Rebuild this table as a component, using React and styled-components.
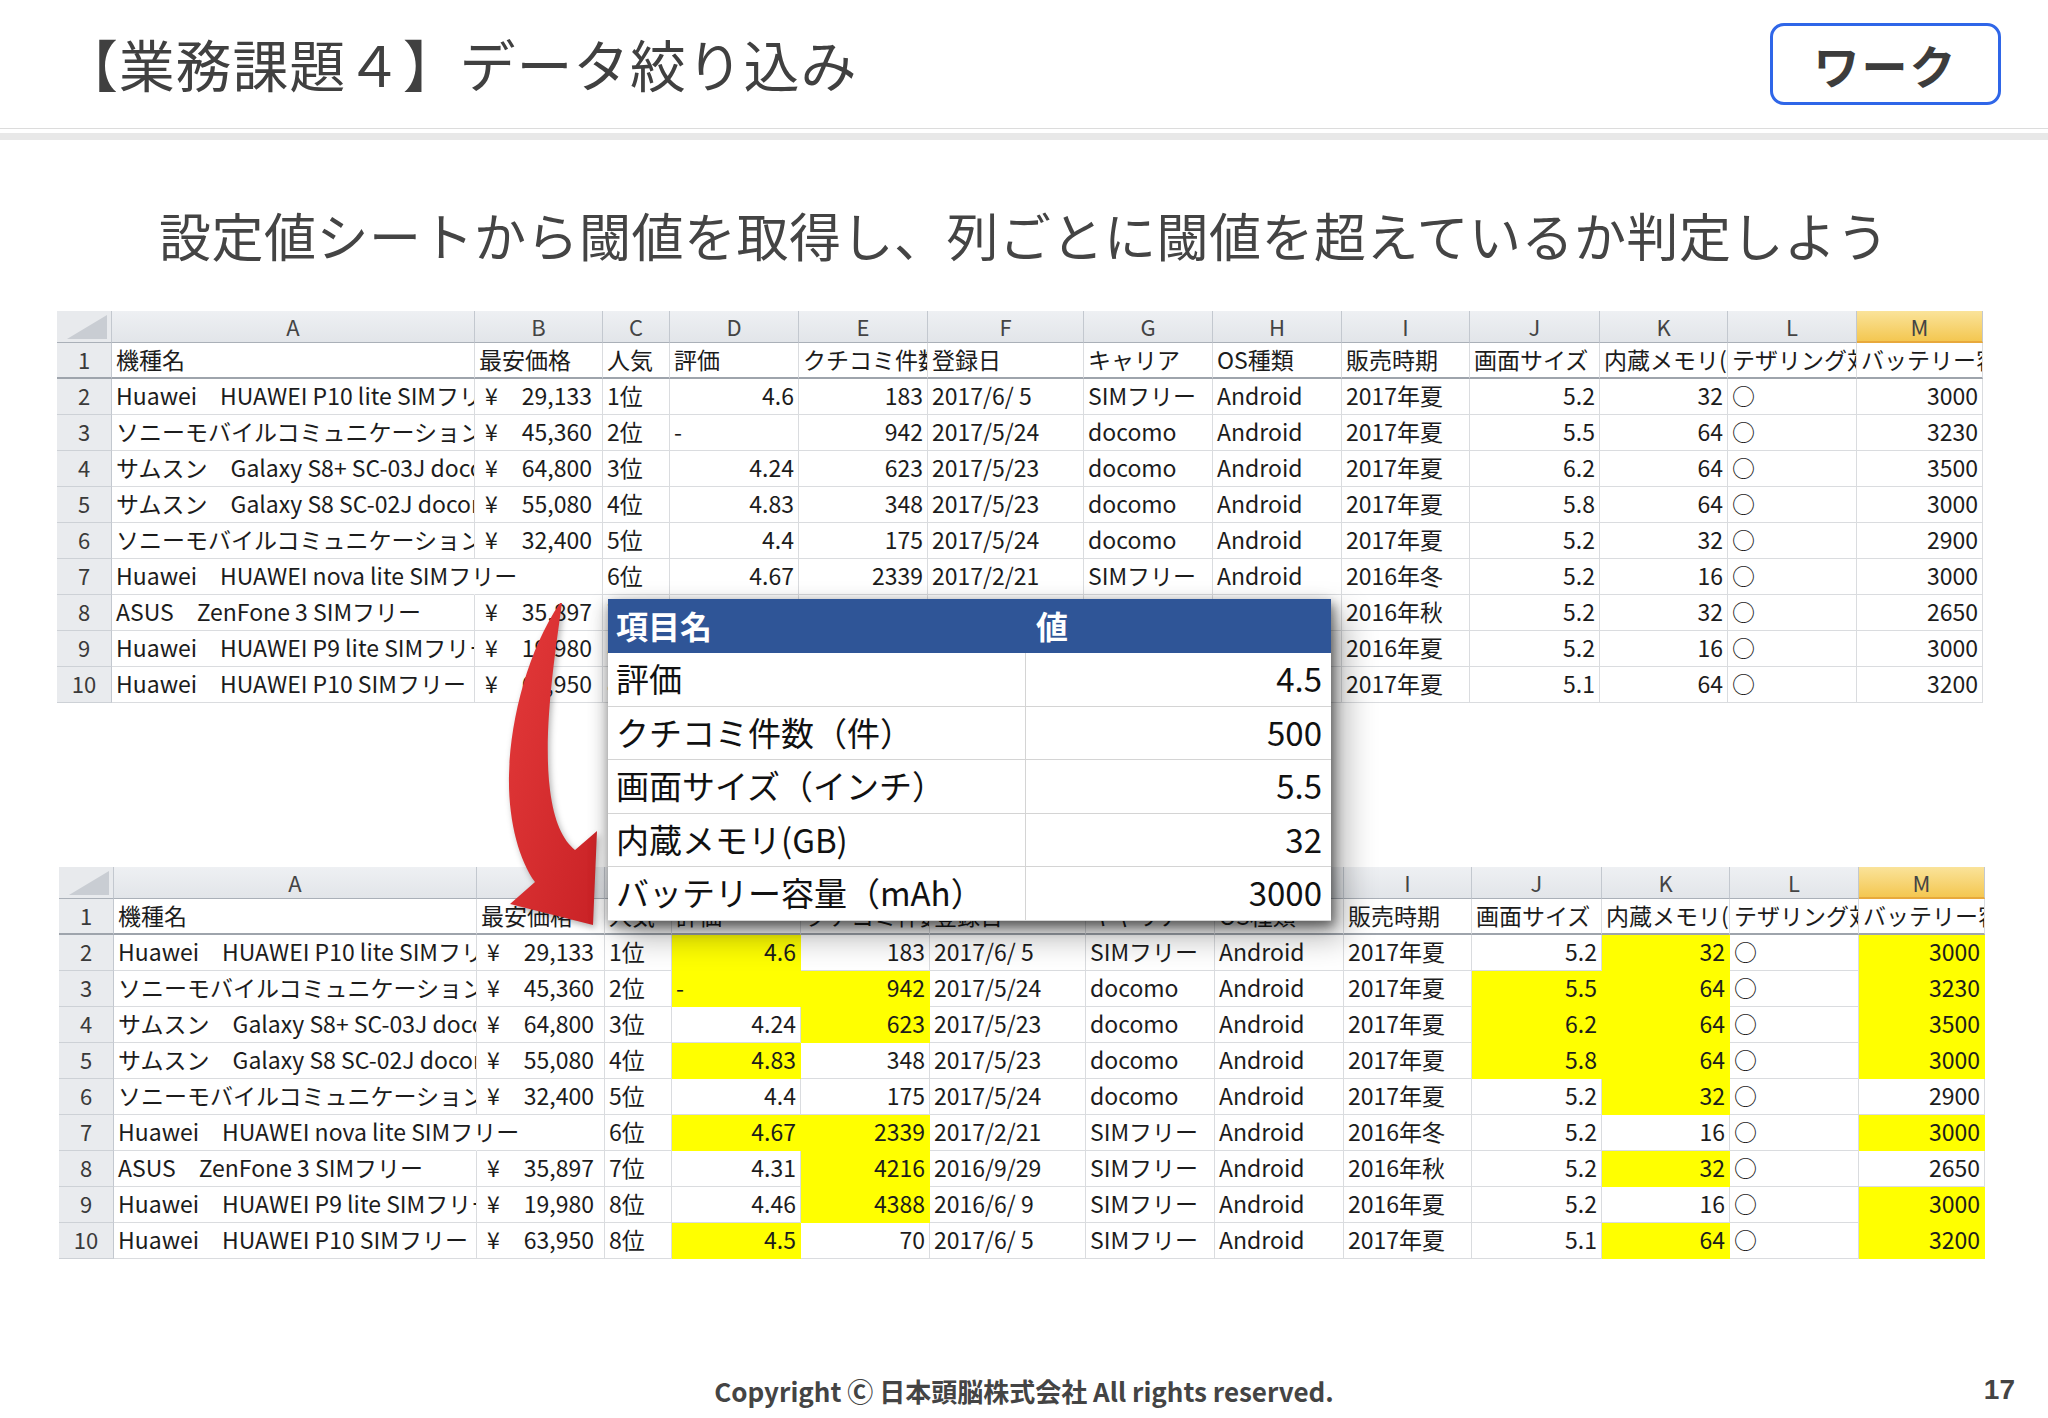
import React from "react";
import styled, { createGlobalStyle, css } from "styled-components";

const GlobalStyle = createGlobalStyle`
  html, body {
    margin: 0;
    padding: 0;
    background: #fff;
  }
  body {
    font-family: "Noto Sans CJK JP", "Noto Sans", sans-serif;
  }
`;

const JP = `"Noto Sans CJK JP", "Noto Sans", sans-serif`;

const cols = [
  { id: "A", w: 363, type: "text" },
  { id: "B", w: 128, type: "yen" },
  { id: "C", w: 67, type: "text" },
  { id: "D", w: 129, type: "num" },
  { id: "E", w: 129, type: "num" },
  { id: "F", w: 156, type: "text" },
  { id: "G", w: 129, type: "text" },
  { id: "H", w: 129, type: "text" },
  { id: "I", w: 128, type: "text" },
  { id: "J", w: 130, type: "num" },
  { id: "K", w: 128, type: "num" },
  { id: "L", w: 129, type: "text" },
  { id: "M", w: 126, type: "num" },
];

const headings = [
  "機種名", "最安価格", "人気", "評価", "クチコミ件数", "登録日", "キャリア",
  "OS種類", "販売時期", "画面サイズ", "内蔵メモリ(GB)", "テザリング対応", "バッテリー容量",
];

const rows = [
  ["Huawei　HUAWEI P10 lite SIMフリー", "29,133", "1位", "4.6", "183", "2017/6/ 5", "SIMフリー", "Android", "2017年夏", "5.2", "32", "○", "3000"],
  ["ソニーモバイルコミュニケーションズ　Xperia XZs", "45,360", "2位", "-", "942", "2017/5/24", "docomo", "Android", "2017年夏", "5.5", "64", "○", "3230"],
  ["サムスン　Galaxy S8+ SC-03J docomo", "64,800", "3位", "4.24", "623", "2017/5/23", "docomo", "Android", "2017年夏", "6.2", "64", "○", "3500"],
  ["サムスン　Galaxy S8 SC-02J docomo", "55,080", "4位", "4.83", "348", "2017/5/23", "docomo", "Android", "2017年夏", "5.8", "64", "○", "3000"],
  ["ソニーモバイルコミュニケーションズ　Xperia XZ", "32,400", "5位", "4.4", "175", "2017/5/24", "docomo", "Android", "2017年夏", "5.2", "32", "○", "2900"],
  ["Huawei　HUAWEI nova lite SIMフリー", "", "6位", "4.67", "2339", "2017/2/21", "SIMフリー", "Android", "2016年冬", "5.2", "16", "○", "3000"],
  ["ASUS　ZenFone 3 SIMフリー", "35,897", "7位", "4.31", "4216", "2016/9/29", "SIMフリー", "Android", "2016年秋", "5.2", "32", "○", "2650"],
  ["Huawei　HUAWEI P9 lite SIMフリー", "19,980", "8位", "4.46", "4388", "2016/6/ 9", "SIMフリー", "Android", "2016年夏", "5.2", "16", "○", "3000"],
  ["Huawei　HUAWEI P10 SIMフリー", "63,950", "8位", "4.5", "70", "2017/6/ 5", "SIMフリー", "Android", "2017年夏", "5.1", "64", "○", "3200"],
];

// cells that pass the threshold in the judged sheet
const hits = new Set([
  "D2", "D3", "D5", "D7", "D10",
  "E3", "E4", "E7", "E8", "E9",
  "J3", "J4", "J5",
  "K2", "K3", "K4", "K5", "K6", "K8", "K10",
  "M2", "M3", "M4", "M5", "M7", "M9", "M10",
]);

const settings = [
  ["評価", "4.5"],
  ["クチコミ件数（件）", "500"],
  ["画面サイズ（インチ）", "5.5"],
  ["内蔵メモリ(GB)", "32"],
  ["バッテリー容量（mAh）", "3000"],
];

const Page = styled.div`
  position: relative;
  width: 2048px;
  height: 1418px;
  overflow: hidden;
  background: #fff;
  color: #404040;
  font-family: ${JP};
`;

const Header = styled.header`
  height: 128px;
  display: flex;
  align-items: center;
  justify-content: space-between;
  padding: 0 47px 0 62px;
  box-sizing: border-box;
`;

const Title = styled.h1`
  margin: 0;
  font-size: 56px;
  font-weight: 400;
  color: #404040;
  letter-spacing: 0.8px;
  position: relative;
  top: -2px;
`;

const WorkBadge = styled.div`
  width: 231px;
  height: 82px;
  box-sizing: border-box;
  border: 3px solid #2f66e8;
  border-radius: 14px;
  display: flex;
  align-items: center;
  justify-content: center;
  font-size: 46px;
  font-weight: 700;
  color: #3c3c3c;
  letter-spacing: 2px;
`;

const Rule = styled.div`
  height: 12px;
  border-top: 1px solid #dcdcdc;
  box-sizing: border-box;
  display: flex;
  flex-direction: column;
  justify-content: flex-end;

  &::after {
    content: "";
    height: 7px;
    background: #e8e8e8;
  }
`;

const Lead = styled.p`
  margin: 65px 0 0 159px;
  font-size: 52px;
  line-height: 60px;
  letter-spacing: 0.5px;
  color: #444;
  font-weight: 400;
`;

const Grid = styled.div`
  display: grid;
  grid-template-columns: 55px ${cols.map((c) => c.w + "px").join(" ")};
  grid-template-rows: 32px repeat(10, 36px);
  width: 1926px;
  margin: ${(p) => p.$top}px 0 0 ${(p) => p.$left}px;
  background: #fff;
  font-family: ${JP};
  color: #1c1c1c;
`;

const Corner = styled.div`
  position: relative;
  background: #e8eaed;
  border-right: 1px solid #c3c8cf;
  border-bottom: 1px solid #aab0b8;
  box-sizing: border-box;

  &::after {
    content: "";
    position: absolute;
    right: 4px;
    bottom: 3px;
    border-left: 40px solid transparent;
    border-bottom: 24px solid #c9cdd3;
  }
`;

const ColHead = styled.div`
  box-sizing: border-box;
  background: ${(p) =>
    p.$active
      ? "linear-gradient(#fae39a, #f4c751)"
      : "linear-gradient(#eef0f3, #e2e5e9)"};
  border-right: 1px solid #c3c8cf;
  border-bottom: ${(p) => (p.$active ? "2px solid #e8a93c" : "1px solid #aab0b8")};
  text-align: center;
  font-size: 22px;
  line-height: 30px;
  color: #444;
`;

const RowHead = styled.div`
  box-sizing: border-box;
  background: #e9ebee;
  border-right: 1px solid #c3c8cf;
  border-bottom: ${(p) => (p.$frozen ? "2px solid #9ea4ac" : "1px solid #cdd1d6")};
  text-align: center;
  font-size: 22px;
  line-height: 33px;
  color: #3a3a3a;
`;

const Cell = styled.div`
  box-sizing: border-box;
  min-width: 0;
  background: ${(p) => p.$fill || "transparent"};
  border-right: 1px solid ${(p) => (p.$spill ? "transparent" : p.$fill || "#dadcdf")};
  border-bottom: ${(p) =>
    p.$frozen ? "2px solid #9ea4ac" : `1px solid ${p.$fill || "#dadcdf"}`};
  padding: 0 4px;
  text-align: ${(p) => p.$align};
  overflow: ${(p) => (p.$spill ? "visible" : "hidden")};
  white-space: nowrap;
  font-size: 23px;
  line-height: 33px;

  ${(p) =>
    p.$yen &&
    css`
      display: flex;
      justify-content: space-between;
      padding: 0 10px 0 10px;
    `}
`;

const Sheet = ({ top, left, judged }) => (
  <Grid $top={top} $left={left}>
    <Corner />
    {cols.map((c) => (
      <ColHead key={c.id} $active={c.id === "M"}>
        {c.id}
      </ColHead>
    ))}

    <RowHead $frozen>1</RowHead>
    {headings.map((h) => (
      <Cell key={h} $align="left" $frozen>
        {h}
      </Cell>
    ))}

    {rows.map((r, ri) => {
      const n = ri + 2;
      return (
        <React.Fragment key={n}>
          <RowHead>{n}</RowHead>
          {r.map((v, ci) => {
            const c = cols[ci];
            const fill = judged && hits.has(c.id + n) ? "#ffff00" : null;
            const spill = ci === 0 && r[1] === "";
            if (c.type === "yen") {
              return (
                <Cell key={c.id} $yen $fill={fill}>
                  {v && (
                    <>
                      <span>¥</span>
                      <span>{v}</span>
                    </>
                  )}
                </Cell>
              );
            }
            const align = c.type === "num" && v !== "-" ? "right" : "left";
            return (
              <Cell key={c.id} $align={align} $fill={fill} $spill={spill}>
                {v}
              </Cell>
            );
          })}
        </React.Fragment>
      );
    })}
  </Grid>
);

const Settings = styled.div`
  position: absolute;
  left: 608px;
  top: 599px;
  width: 723px;
  display: grid;
  grid-template-columns: 418px 305px;
  grid-template-rows: 54px repeat(5, 53.6px);
  background: #fff;
  box-shadow: 3px 5px 10px rgba(0, 0, 0, 0.45), 14px 16px 30px rgba(0, 0, 0, 0.3),
    -4px 4px 16px rgba(0, 0, 0, 0.18);
  font-family: ${JP};
  z-index: 3;
`;

const SetHead = styled.div`
  background: #2f5597;
  color: #fff;
  font-weight: 700;
  font-size: 32px;
  line-height: 52px;
  padding-left: ${(p) => (p.$value ? 10 : 8)}px;
`;

const SetCell = styled.div`
  box-sizing: border-box;
  border-bottom: 1px solid #d4d4d4;
  border-right: ${(p) => (p.$value ? "none" : "1px solid #d4d4d4")};
  font-size: 33px;
  line-height: 50px;
  color: #111;
  padding: 0 9px 0 8px;
  text-align: ${(p) => (p.$value ? "right" : "left")};
  white-space: nowrap;
`;

const ArrowSvg = styled.svg`
  position: absolute;
  left: 490px;
  top: 590px;
  width: 130px;
  height: 350px;
  z-index: 2;
  filter: drop-shadow(2px 3px 3px rgba(0, 0, 0, 0.3));
`;

const Arrow = () => (
  <ArrowSvg viewBox="490 590 130 350">
    <defs>
      <linearGradient id="red" x1="0" y1="0" x2="1" y2="1">
        <stop offset="0" stopColor="#e43a3a" />
        <stop offset="1" stopColor="#c92226" />
      </linearGradient>
    </defs>
    <path
      d="M 562 603 C 554 660, 543 735, 550 790 C 554 822, 563 840, 575 850 L 597 831 L 593 925 L 510 904 L 535 882 C 519 860, 508 820, 509 775 C 510 720, 528 650, 560 603 Z"
      fill="url(#red)"
    />
  </ArrowSvg>
);

const Footer = styled.footer`
  position: absolute;
  left: 0;
  right: 0;
  bottom: 2px;
  height: 52px;
  display: flex;
  align-items: center;
  justify-content: center;
  font-family: "Liberation Sans Narrow", ${JP};
  font-weight: 700;
  font-size: 26px;
  color: #444;
`;

const PageNo = styled.span`
  position: absolute;
  right: 33px;
  font-family: "Liberation Sans Narrow", "Liberation Sans", sans-serif;
  font-weight: 700;
  font-size: 28px;
  color: #444;
`;

export default function App() {
  return (
    <Page>
      <GlobalStyle />
      <Header>
        <Title>【業務課題４】データ絞り込み</Title>
        <WorkBadge>ワーク</WorkBadge>
      </Header>
      <Rule />
      <Lead>設定値シートから閾値を取得し、列ごとに閾値を超えているか判定しよう</Lead>

      <Sheet top={46} left={57} />
      <Sheet top={164} left={59} judged />

      <Settings>
        <SetHead>項目名</SetHead>
        <SetHead $value>値</SetHead>
        {settings.map(([k, v]) => (
          <React.Fragment key={k}>
            <SetCell>{k}</SetCell>
            <SetCell $value>{v}</SetCell>
          </React.Fragment>
        ))}
      </Settings>

      <Arrow />

      <Footer>
        Copyright Ⓒ 日本頭脳株式会社 All rights reserved.
        <PageNo>17</PageNo>
      </Footer>
    </Page>
  );
}
